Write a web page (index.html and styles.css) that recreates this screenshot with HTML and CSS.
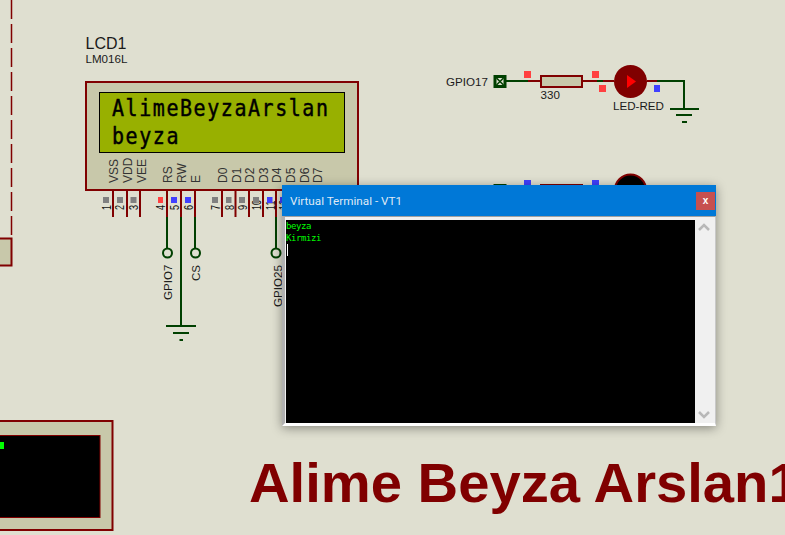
FILE: index.html
```html
<!DOCTYPE html>
<html>
<head>
  <title>Virtual Terminal - VT1</title>
  <link rel="stylesheet" href="styles.css">
</head>
<body>
  <div class="sheet">
    <svg class="schematic" width="785" height="535" viewBox="0 0 785 535">
      <!-- left edge parts -->
      <line class="dash" x1="11.5" y1="0" x2="11.5" y2="235"/>
      <rect class="body" x="-4" y="238.5" width="15.5" height="27"/>

      <!-- LCD1 -->
      <text class="label-big" x="85.5" y="49">LCD1</text>
      <text class="label" x="85.5" y="63">LM016L</text>
      <rect class="body" x="86" y="82" width="272" height="108"/>
      <rect class="screen" x="99.5" y="92.5" width="245" height="60"/>
      <text class="lcd" transform="translate(112,115.500) scale(1,1.150)">AlimeBeyzaArslan</text>
      <text class="lcd" transform="translate(112,143.500) scale(1,1.150)">beyza</text>

      <g class="pin-names">
        <text transform="translate(118,183) rotate(-90)">VSS</text>
        <text transform="translate(132,183) rotate(-90)">VDD</text>
        <text transform="translate(145.5,183) rotate(-90)">VEE</text>
        <text transform="translate(172,183) rotate(-90)">RS</text>
        <text transform="translate(186,183) rotate(-90)">RW</text>
        <text transform="translate(200,183) rotate(-90)">E</text>
        <text transform="translate(227,183) rotate(-90)">D0</text>
        <text transform="translate(240.5,183) rotate(-90)">D1</text>
        <text transform="translate(254,183) rotate(-90)">D2</text>
        <text transform="translate(267.5,183) rotate(-90)">D3</text>
        <text transform="translate(281,183) rotate(-90)">D4</text>
        <text transform="translate(295,183) rotate(-90)">D5</text>
        <text transform="translate(308.5,183) rotate(-90)">D6</text>
        <text transform="translate(322,183) rotate(-90)">D7</text>
      </g>

      <g class="pins">
        <line x1="113" y1="190" x2="113" y2="217"/>
        <line x1="127" y1="190" x2="127" y2="217"/>
        <line x1="140" y1="190" x2="140" y2="217"/>
        <line x1="167" y1="190" x2="167" y2="217"/>
        <line x1="181" y1="190" x2="181" y2="217"/>
        <line x1="195" y1="190" x2="195" y2="217"/>
        <line x1="222" y1="190" x2="222" y2="217"/>
        <line x1="235.5" y1="190" x2="235.5" y2="217"/>
        <line x1="249" y1="190" x2="249" y2="217"/>
        <line x1="263" y1="190" x2="263" y2="217"/>
        <line x1="276" y1="190" x2="276" y2="217"/>
      </g>

      <g class="pin-nums">
        <text transform="translate(110.500,210) rotate(-90) scale(0.7,1)">1</text>
        <text transform="translate(124,210) rotate(-90) scale(0.7,1)">2</text>
        <text transform="translate(138,210) rotate(-90) scale(0.7,1)">3</text>
        <text transform="translate(165,210) rotate(-90) scale(0.7,1)">4</text>
        <text transform="translate(179,210) rotate(-90) scale(0.7,1)">5</text>
        <text transform="translate(193,210) rotate(-90) scale(0.7,1)">6</text>
        <text transform="translate(220,210) rotate(-90) scale(0.7,1)">7</text>
        <text transform="translate(233.500,210) rotate(-90) scale(0.7,1)">8</text>
        <text transform="translate(247,210) rotate(-90) scale(0.7,1)">9</text>
        <text transform="translate(261,210) rotate(-90) scale(0.7,1)">10</text>
        <text transform="translate(274.700,210) rotate(-90) scale(0.7,1)">11</text>
        <text transform="translate(288,210) rotate(-90) scale(0.7,1)">12</text>
      </g>

      <rect class="st-grey" x="103" y="197" width="6" height="6"/>
      <rect class="st-grey" x="117" y="197" width="6" height="6"/>
      <rect class="st-grey" x="130.500" y="197" width="6" height="6"/>
      <rect class="st-red" x="158" y="197" width="5" height="6"/>
      <rect class="st-blue" x="171" y="197" width="6" height="6"/>
      <rect class="st-blue" x="185" y="197" width="6" height="6"/>
      <rect class="st-grey" x="212" y="197" width="6" height="6"/>
      <rect class="st-grey" x="226" y="197" width="5.500" height="6"/>
      <rect class="st-grey" x="239" y="197" width="6" height="6"/>
      <rect class="st-grey" x="253" y="197" width="6" height="6"/>
      <rect class="st-blue" x="267" y="197" width="5.500" height="6"/>
      <rect class="st-blue" x="280" y="197" width="6" height="6"/>

      <!-- LCD wiring -->
      <line class="wire" x1="167" y1="217" x2="167" y2="248"/>
      <circle class="term" cx="167.500" cy="253" r="4.500"/>
      <line class="wire" x1="195" y1="217" x2="195" y2="248"/>
      <circle class="term" cx="195.500" cy="253" r="4.500"/>
      <line class="wire" x1="276" y1="217" x2="276" y2="248"/>
      <circle class="term" cx="276" cy="253" r="4.500"/>
      <line class="wire" x1="181" y1="217" x2="181" y2="326"/>
      <line class="wire" x1="166" y1="326" x2="196" y2="326"/>
      <line class="wire" x1="173" y1="333" x2="189" y2="333"/>
      <line class="wire" x1="179.500" y1="340" x2="183" y2="340"/>

      <text class="label" transform="translate(171.500,300) rotate(-90)">GPIO7</text>
      <text class="label" transform="translate(199.500,281) rotate(-90)">CS</text>
      <text class="label" transform="translate(281.500,307) rotate(-90)">GPIO25</text>

      <!-- red LED row -->
      <text class="label" x="446" y="86">GPIO17</text>
      <rect class="term-box" x="493.500" y="75" width="13" height="13"/>
      <rect class="term-in" x="496.500" y="78" width="7" height="7"/>
      <path class="term-x" d="M496.500 78 L503.500 85 M503.500 78 L496.500 85"/>
      <line class="wire" x1="506" y1="81" x2="528" y2="81"/>
      <line class="pins-h" x1="528" y1="81" x2="541" y2="81"/>
      <rect class="body" x="541" y="76" width="41" height="11"/>
      <line class="pins-h" x1="583" y1="81" x2="597" y2="81"/>
      <line class="wire" x1="597" y1="81" x2="603" y2="81"/>
      <line class="pins-h" x1="603" y1="81" x2="614" y2="81"/>
      <circle class="led-on" cx="630.500" cy="81.500" r="16.500"/>
      <path class="led-arrow" d="M627 75 L636 81.500 L627 88 Z"/>
      <line class="pins-h" x1="647" y1="81" x2="657" y2="81"/>
      <path class="wire" d="M657 81 H684 V109"/>
      <line class="wire" x1="670" y1="109" x2="699" y2="109"/>
      <line class="wire" x1="676" y1="115" x2="692" y2="115"/>
      <line class="wire" x1="682" y1="122" x2="687" y2="122"/>
      <text class="label" x="540.500" y="99">330</text>
      <text class="label" x="613" y="110">LED-RED</text>
      <rect class="st-red" x="524" y="71" width="7" height="7"/>
      <rect class="st-red" x="592" y="71" width="7" height="7"/>
      <rect class="st-red" x="599" y="85" width="7" height="7"/>
      <rect class="st-blue" x="654" y="85" width="6" height="7"/>

      <!-- second LED row, mostly behind the terminal -->
      <rect class="term-box" x="493.500" y="184" width="13" height="13"/>
      <rect class="st-blue" x="524" y="180" width="7" height="7"/>
      <rect class="st-blue" x="592" y="180" width="7" height="7"/>
      <rect class="body" x="541" y="185" width="41" height="11"/>
      <circle class="led-off" cx="630.500" cy="190" r="15.500"/>

      <!-- second virtual terminal, cut by the left edge -->
      <rect class="body" x="-10" y="421" width="122.500" height="109"/>
      <rect class="vt-screen" x="-10" y="435.500" width="110" height="82"/>
      <rect class="vt-dot" x="0" y="442" width="4" height="7"/>
    </svg>

    <div class="title-big">Alime Beyza Arslan1</div>

    <div class="window">
      <div class="titlebar">
        <span class="title-text">Virtual Terminal - VT1</span>
        <span class="close">x</span>
      </div>
      <div class="client">
        <div class="term-screen">
          <div>beyza</div>
          <div>Kirmizi</div>
          <div class="cursor"></div>
        </div>
        <div class="scrollbar">
          <svg width="16" height="12" viewBox="0 0 16 12"><path class="chev" d="M3 9 L8 4 L13 9"/></svg>
          <svg width="16" height="12" viewBox="0 0 16 12"><path class="chev" d="M3 3 L8 8 L13 3"/></svg>
        </div>
      </div>
    </div>
  </div>
</body>
</html>
```

FILE: styles.css
```css
html, body {
  margin: 0;
  padding: 0;
  overflow: hidden;
}
.sheet {
  position: relative;
  width: 785px;
  height: 535px;
  background: #dfdfd0;
  overflow: hidden;
}
.schematic {
  position: absolute;
  left: 0;
  top: 0;
}
text {
  font-family: "Liberation Sans", Arial, sans-serif;
  fill: #1a1a1a;
}
.label-big {
  font-size: 16px;
}
.label {
  font-size: 11.600px;
}
.pin-names text {
  font-size: 12px;
  fill: #333;
}
.pin-nums text {
  font-size: 13px;
  fill: #111;
}
.dash {
  stroke: #800000;
  stroke-width: 1.5;
  stroke-dasharray: 19 5;
}
.body {
  fill: #c8c8aa;
  stroke: #800000;
  stroke-width: 2;
}
.screen {
  fill: #98b000;
  stroke: #000;
  stroke-width: 1;
}
.lcd {
  font-family: "DejaVu Sans Mono", monospace;
  font-size: 20px;
  letter-spacing: 1.560px;
  fill: #000;
  stroke: #000;
  stroke-width: 0.4;
}
.pins line, .pins-h {
  stroke: #800000;
  stroke-width: 2;
}
.wire {
  stroke: #004000;
  stroke-width: 2;
  fill: none;
}
.term {
  fill: none;
  stroke: #004000;
  stroke-width: 2;
}
.term-box {
  fill: #004000;
}
.term-in {
  fill: #dfdfd0;
}
.term-x {
  stroke: #004000;
  stroke-width: 1.5;
  fill: none;
}
.st-grey { fill: #808080; }
.st-red { fill: #ff4040; }
.st-blue { fill: #4040ff; }
.led-on { fill: #800000; }
.led-arrow { fill: #ff0000; }
.led-off {
  fill: #000;
  stroke: #800000;
  stroke-width: 2;
}
.vt-screen {
  fill: #000;
  stroke: #800000;
  stroke-width: 1;
}
.vt-dot { fill: #00ff00; }

.title-big {
  position: absolute;
  left: 249px;
  top: 450px;
  font-family: "Liberation Sans", Arial, sans-serif;
  font-weight: bold;
  font-size: 56.200px;
  line-height: 65px;
  color: #800000;
  white-space: nowrap;
}

.window {
  position: absolute;
  left: 282px;
  top: 185px;
  width: 434px;
  height: 241px;
  display: flex;
  flex-direction: column;
  box-shadow: 0 2px 10px rgba(0, 0, 0, 0.4);
  background: #f0f0f0;
}
.titlebar {
  height: 31px;
  background: #0078d7;
  display: flex;
  align-items: center;
  justify-content: space-between;
  padding: 0 1px 0 8px;
}
.title-text {
  font-family: Roboto, sans-serif;
  font-size: 11.700px;
  color: #dfe9f5;
}
.close {
  width: 19px;
  height: 18px;
  background: #c75050;
  color: #fff;
  font-family: "Liberation Sans", sans-serif;
  font-size: 10px;
  font-weight: bold;
  line-height: 17px;
  text-align: center;
}
.client {
  flex: 1;
  display: flex;
  padding: 3px 3px 0 1px;
  border-top: 1px solid #a0a0a0;
  border-right: 1px solid #c8c8c8;
  border-left: 3px solid #b0b0b0;
  border-bottom: 3px solid #fff;
}
.term-screen {
  flex: 1;
  background: #000;
  color: #00ff00;
  font-family: "DejaVu Sans Mono", monospace;
  font-size: 9px;
  letter-spacing: -0.4px;
  line-height: 11.500px;
  padding-top: 1px;
}
.cursor {
  width: 1px;
  height: 12px;
  background: #fff;
  margin-left: 1px;
}
.scrollbar {
  width: 17px;
  background: #f0f0f0;
  display: flex;
  flex-direction: column;
  justify-content: space-between;
  align-items: center;
  padding: 1px 0 2px;
}
.chev {
  fill: none;
  stroke: #b8b8b8;
  stroke-width: 2.500;
}
```
